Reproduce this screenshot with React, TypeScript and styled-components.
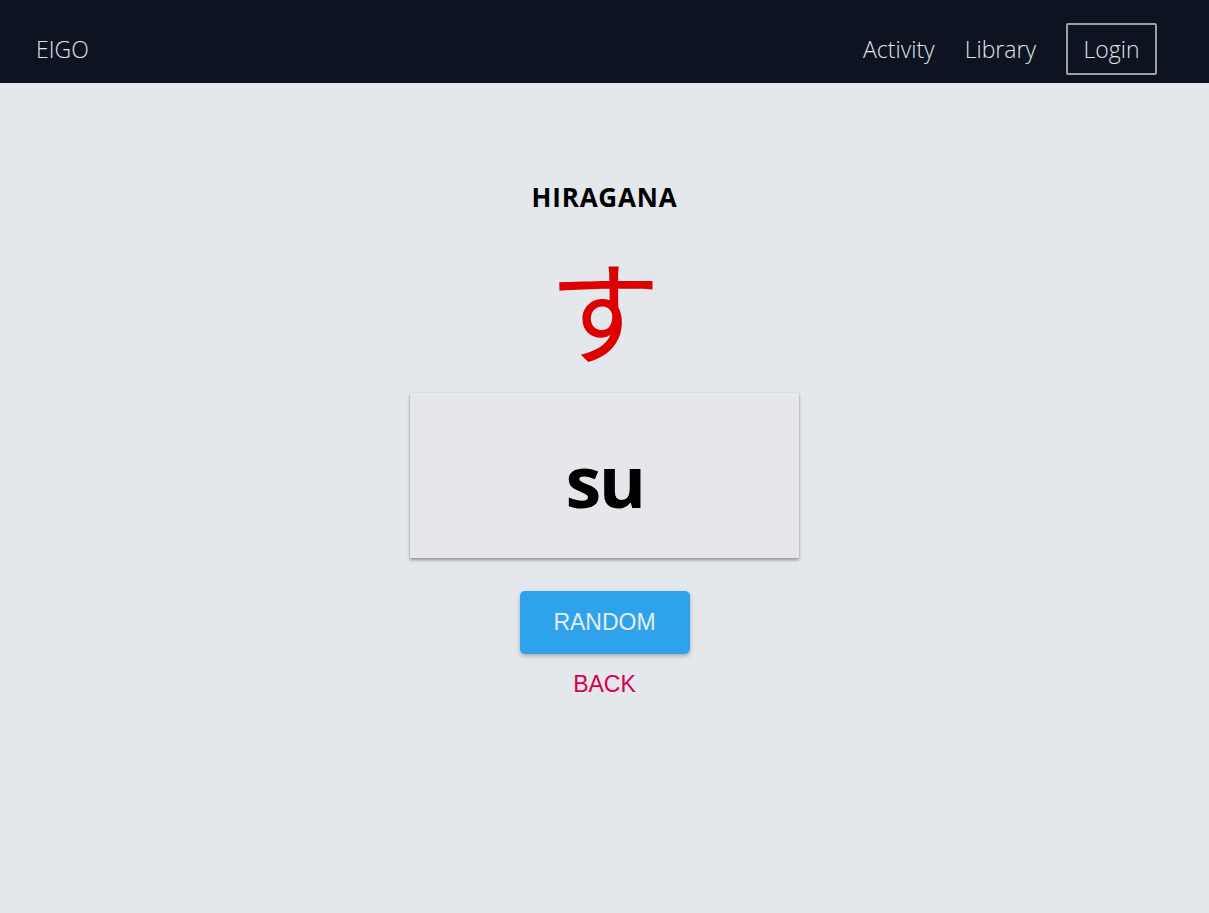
import React from "react";
import styled, { createGlobalStyle } from "styled-components";

const Global = createGlobalStyle`
  html, body { margin: 0; padding: 0; }
  body {
    background: #e4e7eb;
    font-family: "Open Sans", "Noto Sans", sans-serif;
    min-height: 100vh;
  }
  #root { min-height: 100vh; display: flex; flex-direction: column; }
`;

const Header = styled.header`
  height: 83px;
  background: #0d1321;
  display: flex;
  align-items: center;
  justify-content: space-between;
  padding: 14px 52px 0 36px;
  box-sizing: border-box;
`;

const Brand = styled.div`
  color: #dfe3ea;
  font-family: "Open Sans", sans-serif;
  font-weight: 300;
  font-size: 23px;
`;

const Nav = styled.nav`
  display: flex;
  align-items: center;
  gap: 30px;
`;

const NavLink = styled.a<{ $boxed?: boolean }>`
  color: #dfe3ea;
  font-family: "Open Sans", sans-serif;
  font-weight: 300;
  font-size: 23px;
  text-decoration: none;
  box-sizing: border-box;
  ${(p) =>
    p.$boxed
      ? `
    border: 2px solid #9ca0a7;
    border-radius: 2px;
    width: 91px;
    height: 52px;
    display: flex;
    align-items: center;
    justify-content: center;
    margin-top: 0px;
  `
      : ""}
`;

const Main = styled.main`
  flex: 1;
  display: flex;
  flex-direction: column;
  align-items: center;
  padding-top: 97px;
`;

const Title = styled.h1`
  margin: 0;
  font-family: "Open Sans", sans-serif;
  font-weight: 700;
  font-size: 26px;
  line-height: 35px;
  color: #000;
  letter-spacing: 0.8px;
`;

const Kana = styled.div`
  margin-top: 36px;
  font-family: "Noto Sans CJK JP", sans-serif;
  font-size: 112px;
  line-height: 112px;
  color: #dd0000;
`;

const Card = styled.div`
  margin-top: 30px;
  width: 389px;
  height: 165px;
  background: #e5e7eb;
  box-shadow: 0 2px 3px rgba(0, 0, 0, 0.35), 0 0 2px rgba(0, 0, 0, 0.08);
  display: flex;
  align-items: center;
  justify-content: center;
`;

const Romaji = styled.div`
  font-family: "Open Sans", sans-serif;
  font-weight: 700;
  font-size: 72px;
  letter-spacing: -2.5px;
  color: #000;
  line-height: 1;
  padding-top: 8px;
`;

const Button = styled.button`
  margin-top: 33px;
  width: 170px;
  height: 63px;
  border: none;
  border-radius: 5px;
  background: #2ea3ec;
  color: #e5edf5;
  font-family: "Liberation Sans", Arial, sans-serif;
  font-size: 23px;
  box-shadow: 0 2px 4px rgba(0, 0, 0, 0.25);
  cursor: pointer;
`;

const Back = styled.a`
  margin-top: 17px;
  color: #d6004f;
  font-family: "Liberation Sans", Arial, sans-serif;
  font-size: 23px;
  text-decoration: none;
`;

export default function App() {
  return (
    <>
      <Global />
      <Header>
        <Brand>EIGO</Brand>
        <Nav>
          <NavLink href="#">Activity</NavLink>
          <NavLink href="#">Library</NavLink>
          <NavLink href="#" $boxed>
            Login
          </NavLink>
        </Nav>
      </Header>
      <Main>
        <Title>HIRAGANA</Title>
        <Kana>す</Kana>
        <Card>
          <Romaji>su</Romaji>
        </Card>
        <Button>RANDOM</Button>
        <Back href="#">BACK</Back>
      </Main>
    </>
  );
}
